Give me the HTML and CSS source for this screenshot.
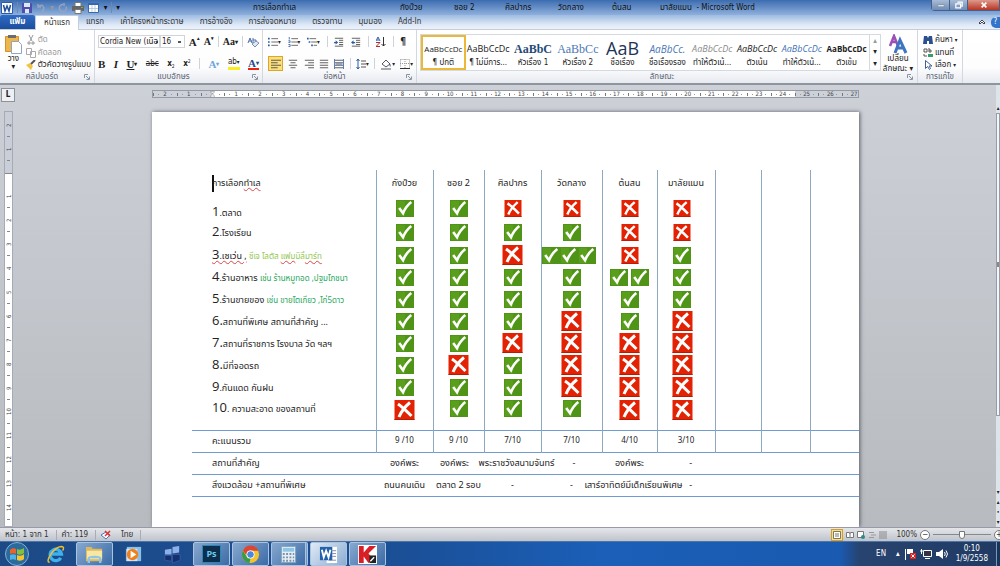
FILE: index.html
```html
<!DOCTYPE html>
<html lang="th">
<head>
<meta charset="utf-8">
<title>การเลือกทำเล - Microsoft Word</title>
<link rel="stylesheet" href="styles.css">
</head>
<body>
<svg class="defs" aria-hidden="true">
  <symbol id="ok" viewBox="0 0 18 17"><path fill="#4f9416" d="M0 0h18v17H0z"/><path fill="#66a91f" d="M1 1h8v15H1z" opacity=".5"/><path fill="none" stroke="#fff" stroke-width="2.600" d="M3.200 8 7 13.200C9 8.500 11.500 5 15.300 2"/></symbol>
  <symbol id="no" viewBox="0 0 20 20"><path fill="#e32204" d="M0 0h20v20H0z"/><path fill="#b51b05" d="M0 19h20v1H0z"/><path fill="none" stroke="#fff" stroke-width="3" d="M3.500 4C8 7 12 11 17 16M15.500 2.500C10 7 7 11 4.500 17"/></symbol>
  <symbol id="lines" viewBox="0 0 12 12"><path stroke="#444" d="M0 1.500h12M0 4.500h8M0 7.500h12M0 10.500h8"/></symbol>
  <symbol id="center" viewBox="0 0 12 12"><path stroke="#444" d="M1 1.500h10M3 4.500h6M1 7.500h10M3 10.500h6"/></symbol>
  <symbol id="right" viewBox="0 0 12 12"><path stroke="#444" d="M1 1.500h11M5 4.500h7M1 7.500h11M5 10.500h7"/></symbol>
  <symbol id="full" viewBox="0 0 12 12"><path stroke="#444" d="M1 1.500h10M1 4.500h10M1 7.500h10M1 10.500h10"/></symbol>
  <symbol id="bul" viewBox="0 0 12 12"><path stroke="#555" d="M4 2h8M4 6h8M4 10h8"/><path fill="#2b5ca8" d="M0 1h2v2H0zM0 5h2v2H0zM0 9h2v2H0z"/></symbol>
  <symbol id="num" viewBox="0 0 12 12"><path stroke="#555" d="M4 2h8M4 6h8M4 10h8"/><path fill="none" stroke="#2b5ca8" d="M1.500 0v3M.5 4.500h2v2h-2M.5 9h2v2.500h-2"/></symbol>
  <symbol id="multi" viewBox="0 0 12 12"><path stroke="#555" d="M3 2h8M5 6h7M8 10h4"/><path fill="#2b5ca8" d="M0 1h2v2H0zM2 5h2v2H2zM5 9h2v2H5z"/></symbol>
  <symbol id="indent" viewBox="0 0 12 12"><path stroke="#444" d="M1 1.500h10M6 4h5M6 6.500h5M6 9h5M1 11h10"/><path fill="#2b5ca8" d="M0 6.500 3 4v2h2v1.500H3V9z"/></symbol>
  <symbol id="outdent" viewBox="0 0 12 12"><path stroke="#444" d="M1 1.500h10M6 4h5M6 6.500h5M6 9h5M1 11h10"/><path fill="#2b5ca8" d="M5 6.500 2 4v2H0v1.500h2V9z"/></symbol>
  <symbol id="dialog" viewBox="0 0 6 6"><path fill="none" stroke="#8a93a0" d="M.5 4V.5H4M2 2l3 3M5.500 2.500v3h-3"/></symbol>
</svg>
<div class="app">
  <header class="titlebar">
    <div class="qat">
      <svg class="i12" viewBox="0 0 12 12"><path fill="#fff" stroke="#2a5da8" d="M.5.5h11v11H.5z"/><path fill="none" stroke="#1e4f9f" stroke-width="1.500" d="m2.500 3 1.500 6L6 4l2 5 1.500-6"/></svg>
      <i class="sep"></i>
      <svg class="i10" viewBox="0 0 10 10"><path fill="#4c4fae" d="M0 0h9l1 1v9H0z"/><path fill="#dfe6f6" d="M2 0h6v4H2zM3 6h4v4H3z"/></svg>
      <svg class="i10" viewBox="0 0 10 10"><path fill="none" stroke="#93a4c0" stroke-width="1.500" d="M2 1v3h3M2 4c4-4 8 0 4 5"/></svg><span class="dim">▾</span>
      <svg class="i10" viewBox="0 0 10 10"><path fill="none" stroke="#93a4c0" stroke-width="1.500" d="M5 1.500a3.500 3.500 0 1 0 3 2M6 0v3"/></svg>
      <svg class="i12" viewBox="0 0 12 12"><path fill="#fff" stroke="#777" d="M3 .5h6v4H3z"/><path fill="#666" d="M0 4h12v5H0z"/><path fill="#fff" stroke="#777" d="M3 7.500h6v4H3z"/><path fill="#6dbd45" d="M9 5h2v1H9z"/></svg>
      <svg class="i12" viewBox="0 0 12 12"><path fill="#fff" stroke="#3768af" d="M.5 1.500h10v9H.5z"/><path fill="#3768af" d="M0 1h11v2H0z"/><path stroke="#bcd" d="M4 3v7M7 3v7M1 6.500h9"/></svg><span>▾</span>
      <i class="sep"></i><span>▾</span>
    </div>
    <span>การเลือกทำเล</span><span>กังบ๊วย</span><span>ซอย 2</span><span>ศิลปากร</span><span>วัดกลาง</span><span>ต้นสน</span><span>มาลัยแมน&nbsp; - Microsoft Word</span>
    <div class="winbtns">
      <button type="button" aria-label="ย่อ"><svg class="i10" viewBox="0 0 10 10"><path fill="#fff" stroke="#567" stroke-width=".5" d="M1 5h8v2H1z"/></svg></button>
      <button type="button" aria-label="คืนค่า"><svg class="i10" viewBox="0 0 10 10"><path fill="none" stroke="#fff" stroke-width="1.500" d="M3 1.500h6v5H7M1 3.500h6v5H1z"/></svg></button>
      <button type="button" class="close" aria-label="ปิด"><svg class="i10" viewBox="0 0 10 10"><path stroke="#fff" stroke-width="2" d="m2 2 6 6M8 2 2 8"/></svg></button>
    </div>
  </header>
  <nav class="tabs">
    <button type="button" class="file">แฟ้ม</button>
    <button type="button" class="on">หน้าแรก</button>
    <button type="button">แทรก</button>
    <button type="button">เค้าโครงหน้ากระดาษ</button>
    <button type="button">การอ้างอิง</button>
    <button type="button">การส่งจดหมาย</button>
    <button type="button">ตรวจทาน</button>
    <button type="button">มุมมอง</button>
    <button type="button">Add-In</button>
    <span class="help"><svg class="i8" viewBox="0 0 8 8"><path fill="#fff" stroke="#445" d="m1 5 3-3 3 3-1 1-2-2-2 2z"/></svg><button type="button" class="q">?</button></span>
  </nav>
  <section class="ribbon">
    <div class="group clip">
      <div class="body">
        <button type="button" class="big"><svg class="i20" viewBox="0 0 20 20"><path fill="#edb64c" stroke="#d2922b" d="M2.500 2.500h13v15h-13z"/><path fill="#6c6c70" d="M5 1h8v3H5z"/><path fill="#fff" stroke="#8fa5c4" d="M8.500 7.500h7l3 3v9h-10z"/></svg><span>วาง</span><span class="car">▾</span></button>
        <div class="stack">
          <button type="button" class="dim"><svg class="i10" viewBox="0 0 10 10"><path fill="none" stroke="#999" d="m3 0 3 6M7 0 4 6M2 7h2v2H2zM6 7h2v2H6z"/></svg>ตัด</button>
          <button type="button" class="dim"><svg class="i10" viewBox="0 0 10 10"><path fill="#fff" stroke="#aaa" d="M.5.5h5v6h-5zM4.500 3.500h5v6h-5z"/></svg>คัดลอก</button>
          <button type="button"><svg class="i10" viewBox="0 0 10 10"><path fill="#f1c543" d="m0 5 4-2 3 3-2 4z"/><path stroke="#555" stroke-width="2" d="m5 4 4-4"/></svg>ตัวคัดวางรูปแบบ</button>
        </div>
      </div>
      <div class="cap"><span>คลิปบอร์ด</span><svg class="i6"><use href="#dialog"/></svg></div>
    </div>
    <div class="group font">
      <div class="body rows">
        <div class="line">
          <select class="face" aria-label="แบบอักษร"><option>Cordia New (เนื้อ</option></select><select class="size" aria-label="ขนาด"><option>16</option></select>
          <button type="button" class="serif">A<sup>▴</sup></button><button type="button" class="serif sm">A<sup>▾</sup></button><i class="sep"></i>
          <button type="button" class="serif sm">Aa<small>▾</small></button><i class="sep"></i>
          <button type="button" aria-label="ล้างการจัดรูปแบบ"><svg class="i12" viewBox="0 0 12 12"><path fill="none" stroke="#4b6ea8" d="m1 7 2-5 2 5M2 5h3M6 2v5h3V4H6"/><path fill="#dfe8f5" stroke="#7c8fb0" d="m5 8 4-3 3 2-4 4z"/></svg></button>
        </div>
        <div class="line spread">
          <button type="button" class="serif"><b>B</b></button><button type="button" class="serif"><i>I</i></button><button type="button" class="serif"><u>U</u><small>▾</small></button><button type="button"><s>abc</s></button><button type="button"><b>x</b><sub>2</sub></button><button type="button"><b>x</b><sup>2</sup></button><i class="sep"></i>
          <button type="button" class="serif glow">A<small>▾</small></button><button type="button" class="hl">ab<small>▾</small></button><button type="button" class="serif red"><b>A</b><small>▾</small></button>
        </div>
      </div>
      <div class="cap"><span>แบบอักษร</span><svg class="i6"><use href="#dialog"/></svg></div>
    </div>
    <div class="group para">
      <div class="body rows">
        <div class="line spread">
          <button type="button"><svg class="i10"><use href="#bul"/></svg><small>▾</small></button><button type="button"><svg class="i10"><use href="#num"/></svg><small>▾</small></button><button type="button"><svg class="i10"><use href="#multi"/></svg><small>▾</small></button><i class="sep"></i>
          <button type="button"><svg class="i10"><use href="#outdent"/></svg></button><button type="button"><svg class="i10"><use href="#indent"/></svg></button><i class="sep"></i>
          <button type="button"><svg class="i10" viewBox="0 0 10 10"><path fill="none" stroke="#2b5ca8" d="m0 4 2-4 2 4M1 3h2"/><path fill="none" stroke="#b03030" d="M0 5.500h4l-4 4h4"/><path stroke="#333" d="M7.500 0v9M5.500 7l2 2 2-2" fill="none"/></svg></button><i class="sep"></i>
          <button type="button" class="pil">¶</button><span></span>
        </div>
        <div class="line spread">
          <button type="button" class="sel"><svg class="i10"><use href="#lines"/></svg></button><button type="button"><svg class="i10"><use href="#center"/></svg></button><button type="button"><svg class="i10"><use href="#right"/></svg></button><button type="button"><svg class="i10"><use href="#full"/></svg></button><button type="button"><svg class="i10" viewBox="0 0 12 12"><use href="#full"/><path stroke="#2b5ca8" fill="none" d="M.5 0v12M11.500 0v12M2 6h8"/></svg></button><i class="sep"></i>
          <button type="button"><svg class="i10" viewBox="0 0 10 10"><path stroke="#2b5ca8" fill="none" d="M2 0v10M.5 2 2 0l1.500 2M.5 8 2 10l1.500-2"/><path stroke="#555" d="M5 2h5M5 5h5M5 8h5"/></svg><small>▾</small></button><i class="sep"></i>
          <button type="button"><svg class="i12" viewBox="0 0 12 12"><path fill="#fff" stroke="#556" d="m2 6 4-4 4 4-4 3z"/><path fill="#2b5ca8" d="M9 5c2 1 2 3 1 4z"/><path fill="#aaa" d="M1 10h10v2H1z"/></svg><small>▾</small></button><button type="button"><svg class="i10" viewBox="0 0 10 10"><path fill="none" stroke="#999" stroke-dasharray="1 1" d="M.5.5h9v8M.5.5v8M5 0v9M0 4.500h10"/><path stroke="#333" d="M0 9.500h10"/></svg><small>▾</small></button>
        </div>
      </div>
      <div class="cap"><span>ย่อหน้า</span><svg class="i6"><use href="#dialog"/></svg></div>
    </div>
    <div class="group styles">
      <div class="body">
        <div class="gallery">
          <button type="button" class="cur"><span class="s">AaBbCcDc</span><span>¶ ปกติ</span></button>
          <button type="button"><span class="s">AaBbCcDc</span><span>¶ ไม่มีการ...</span></button>
          <button type="button"><span class="s h1">AaBbC</span><span>หัวเรื่อง 1</span></button>
          <button type="button"><span class="s h2">AaBbCc</span><span>หัวเรื่อง 2</span></button>
          <button type="button"><span class="s ttl">AaB</span><span>ชื่อเรื่อง</span></button>
          <button type="button"><span class="s sub">AaBbCc.</span><span>ชื่อเรื่องรอง</span></button>
          <button type="button"><span class="s subtle">AaBbCcDc</span><span>ทำให้ตัวเน้...</span></button>
          <button type="button"><span class="s em">AaBbCcDc</span><span>ตัวเน้น</span></button>
          <button type="button"><span class="s int">AaBbCcDc</span><span>ทำให้ตัวเน้...</span></button>
          <button type="button"><span class="s strong">AaBbCcDc</span><span>ตัวเข้ม</span></button>
        </div>
        <div class="scroller"><button type="button" class="dim">▴</button><button type="button">▾</button><button type="button">▾</button></div>
        <button type="button" class="big change"><svg class="i20" viewBox="0 0 20 20"><path fill="none" stroke="#9c4fb4" stroke-width="2.500" d="m2 12 4-10 4 10M4 8h5"/><path fill="none" stroke="#3f74c0" stroke-width="3" d="m7 19 5-13 6 13M9 14h7"/></svg><span>เปลี่ยน</span><span>ลักษณะ ▾</span></button>
      </div>
      <div class="cap"><span>ลักษณะ</span><svg class="i6"><use href="#dialog"/></svg></div>
    </div>
    <div class="group edit">
      <div class="body"><div class="stack">
        <button type="button"><svg class="i10" viewBox="0 0 10 10"><path fill="#2c4f8f" d="M1 1h3l1 2 1-2h3l1 8H6V6H4v3H0z"/></svg>ค้นหา <small>▾</small></button>
        <button type="button"><svg class="i10" viewBox="0 0 10 10"><path fill="none" stroke="#555" d="M1 1h3v3H1zM6 0v4h2V2H6M1 6v2h3"/><path fill="#3a9b6b" d="M5 6h5v3H5z"/></svg>แทนที่</button>
        <button type="button"><svg class="i10" viewBox="0 0 10 10"><path fill="#fff" stroke="#3f5f95" d="M2.500.5v8l2-2 2 3 1-1-1.500-2.500H9z"/></svg>เลือก <small>▾</small></button>
      </div></div>
      <div class="cap"><span>การแก้ไข</span></div>
    </div>
  </section>
  <main class="work">
    <div class="left">
      <button type="button" class="tabsel">L</button>
      <div class="vruler"><div class="vin top"><span>2</span><span>1</span></div><div class="vin"><span>1</span><span>2</span><span>3</span><span>4</span><span>5</span><span>6</span><span>7</span><span>8</span><span>9</span><span>10</span><span>11</span><span>12</span><span>13</span><span>14</span></div></div>
    </div>
    <div class="canvas">
      <div class="hruler">
        <div class="hin"><span>2</span><span>1</span><span class="zero"><svg viewBox="0 0 8 14"><path fill="#eee" stroke="#777" d="M.5.500h7v2L4 6 .5 2.500zM4 6l3.500 3v4h-7V9z"/></svg></span><span>1</span><span>2</span><span>3</span><span>4</span><span>5</span><span>6</span><span>7</span><span>8</span><span>9</span><span>10</span><span>11</span><span>12</span><span>13</span><span>14</span><span>15</span><span>16</span><span>17</span><span>18</span><span>19</span><span>20</span><span>21</span><span>22</span><span>23</span><span>24</span><span>25</span><span>26</span><span>27</span></div>
      </div>
      <article class="page">
        <table>
          <colgroup><col class="c0"><col class="c1"><col class="c2"><col class="c3"><col class="c4"><col class="c5"><col class="c6"><col class="c7"><col class="c8"><col></colgroup>
          <thead><tr><th scope="col"><span class="caret"></span>การเลือก<span class="err">ทำเล</span></th><th scope="col">กังบ๊วย</th><th scope="col">ซอย 2</th><th scope="col">ศิลปากร</th><th scope="col">วัดกลาง</th><th scope="col">ต้นสน</th><th scope="col">มาลัยแมน</th><th></th><th></th><th></th></tr></thead>
          <tbody>
          <tr class="tall first"><th scope="row"><b>1</b>.ตลาด</th><td><svg class="ok"><use href="#ok"/></svg></td><td><svg class="ok"><use href="#ok"/></svg></td><td><svg class="no sm"><use href="#no"/></svg></td><td><svg class="no sm"><use href="#no"/></svg></td><td><svg class="no sm"><use href="#no"/></svg></td><td><svg class="no sm"><use href="#no"/></svg></td><td></td><td></td><td></td></tr>
          <tr class="tall"><th scope="row"><b>2</b>.โรงเรียน</th><td><svg class="ok"><use href="#ok"/></svg></td><td><svg class="ok"><use href="#ok"/></svg></td><td><svg class="ok"><use href="#ok"/></svg></td><td><svg class="ok"><use href="#ok"/></svg></td><td><svg class="no sm"><use href="#no"/></svg></td><td><svg class="no sm"><use href="#no"/></svg></td><td></td><td></td><td></td></tr>
          <tr><th scope="row"><span class="err"><b>3</b>.เซเว่น ,</span> <span class="lime">ซีเจ โลตัส <span class="err">แฟม</span>มิลี่<span class="err">มาร์ท</span></span></th><td><svg class="ok"><use href="#ok"/></svg></td><td><svg class="ok"><use href="#ok"/></svg></td><td><svg class="no"><use href="#no"/></svg></td><td><span class="run"><svg class="ok"><use href="#ok"/></svg><svg class="ok"><use href="#ok"/></svg><svg class="ok"><use href="#ok"/></svg></span></td><td><svg class="no sm"><use href="#no"/></svg></td><td><svg class="ok"><use href="#ok"/></svg></td><td></td><td></td><td></td></tr>
          <tr><th scope="row"><b>4</b>.ร้านอาหาร <span class="green">เช่น ร้านหมูทอด ,ปฐมโภชนา</span></th><td><svg class="ok"><use href="#ok"/></svg></td><td><svg class="ok"><use href="#ok"/></svg></td><td><svg class="ok"><use href="#ok"/></svg></td><td><svg class="ok"><use href="#ok"/></svg></td><td><span class="run two"><svg class="ok"><use href="#ok"/></svg><svg class="ok"><use href="#ok"/></svg></span></td><td><svg class="ok"><use href="#ok"/></svg></td><td></td><td></td><td></td></tr>
          <tr><th scope="row"><b>5</b>.ร้านขายของ <span class="green">เช่น ขายโตเกียว ,ไก่5ดาว</span></th><td><svg class="ok"><use href="#ok"/></svg></td><td><svg class="ok"><use href="#ok"/></svg></td><td><svg class="ok"><use href="#ok"/></svg></td><td><svg class="ok"><use href="#ok"/></svg></td><td><svg class="ok"><use href="#ok"/></svg></td><td><svg class="ok"><use href="#ok"/></svg></td><td></td><td></td><td></td></tr>
          <tr><th scope="row"><b>6.</b>สถานที่พิเศษ สถานที่สำคัญ ...</th><td><svg class="ok"><use href="#ok"/></svg></td><td><svg class="ok"><use href="#ok"/></svg></td><td><svg class="ok"><use href="#ok"/></svg></td><td><svg class="no"><use href="#no"/></svg></td><td><svg class="ok"><use href="#ok"/></svg></td><td><svg class="no"><use href="#no"/></svg></td><td></td><td></td><td></td></tr>
          <tr><th scope="row"><b>7.</b>สถานที่ราชการ โรงบาล วัด ฯลฯ</th><td><svg class="ok"><use href="#ok"/></svg></td><td><svg class="ok"><use href="#ok"/></svg></td><td><svg class="no"><use href="#no"/></svg></td><td><svg class="no"><use href="#no"/></svg></td><td><svg class="no"><use href="#no"/></svg></td><td><svg class="no"><use href="#no"/></svg></td><td></td><td></td><td></td></tr>
          <tr><th scope="row"><b>8.</b>มีที่จอดรถ</th><td><svg class="ok"><use href="#ok"/></svg></td><td><svg class="no"><use href="#no"/></svg></td><td><svg class="ok"><use href="#ok"/></svg></td><td><svg class="no"><use href="#no"/></svg></td><td><svg class="no"><use href="#no"/></svg></td><td><svg class="no"><use href="#no"/></svg></td><td></td><td></td><td></td></tr>
          <tr><th scope="row"><b>9</b>.กันแดด กันฝน</th><td><svg class="ok"><use href="#ok"/></svg></td><td><svg class="ok"><use href="#ok"/></svg></td><td><svg class="ok"><use href="#ok"/></svg></td><td><svg class="no"><use href="#no"/></svg></td><td><svg class="no"><use href="#no"/></svg></td><td><svg class="no"><use href="#no"/></svg></td><td></td><td></td><td></td></tr>
          <tr class="last"><th scope="row"><b>10</b>. ความสะอาด ของสถานที่</th><td><svg class="no"><use href="#no"/></svg></td><td><svg class="ok"><use href="#ok"/></svg></td><td><svg class="ok"><use href="#ok"/></svg></td><td><svg class="ok"><use href="#ok"/></svg></td><td><svg class="no"><use href="#no"/></svg></td><td><svg class="no"><use href="#no"/></svg></td><td></td><td></td><td></td></tr>
          </tbody>
          <tfoot>
          <tr class="score"><th scope="row">คะแนนรวม</th><td>9 /10</td><td>9 /10</td><td>7/10</td><td>7/10</td><td>4/10</td><td>3/10</td><td></td><td></td><td></td></tr>
          <tr class="note"><th scope="row">สถานที่สำคัญ</th><td>องค์พระ</td><td>องค์พระ</td><td><span class="over">พระราชวังสนามจันทร์</span></td><td>&nbsp; -</td><td>องค์พระ</td><td>&nbsp; &nbsp; -</td><td></td><td></td><td></td></tr>
          <tr class="note"><th scope="row">สิ่งแวดล้อม +สถานที่พิเศษ</th><td>ถนนคนเดิน</td><td>ตลาด 2 รอบ</td><td>-</td><td>-</td><td><span class="over">เสาร์อาทิตย์มีเด็กเรียนพิเศษ</span></td><td>&nbsp; &nbsp; -</td><td></td><td></td><td></td></tr>
          </tfoot>
        </table>
      </article>
    </div>
    <div class="vscroll"><button type="button">▴</button><div class="thumb"></div><button type="button">▾</button><button type="button">▴</button><button type="button">•</button><button type="button">▾</button></div>
  </main>
  <footer class="status">
    <span>หน้า: 1 จาก 1</span><span>คำ: 119</span><span class="plain"><svg class="i10" viewBox="0 0 10 10"><path fill="#fff" stroke="#4a78bd" d="m0 5 5-3 4 3-4 4z"/><path stroke="#d33" stroke-width="1.500" d="m4 1 5 5M9 1 4 6"/></svg></span><span>ไทย</span>
    <div class="views">
      <button type="button" class="sel"><svg class="i8" viewBox="0 0 8 8"><path fill="#fff" stroke="#777" d="M.5.5h7v7h-7zM2 3h4M2 5h4"/></svg></button><button type="button"><svg class="i8" viewBox="0 0 8 8"><path fill="#fff" stroke="#777" d="M.5 1.500h3l.5 1 .5-1h3v5h-3L4 7l-.5-.5h-3zM4 2v5"/></svg></button><button type="button"><svg class="i8" viewBox="0 0 8 8"><path fill="#fff" stroke="#777" d="M.5.5h6v6h-6z"/><circle cx="6" cy="6" r="2" fill="#2c8a8a"/></svg></button><button type="button"><svg class="i8" viewBox="0 0 8 8"><path stroke="#999" d="M1 1.500h5M3 4h5M1 6.500h5"/></svg></button><button type="button"><svg class="i8" viewBox="0 0 8 8"><path stroke="#888" d="M0 1h8M0 3h8M0 5h8M0 7h8"/></svg></button>
      <span class="pct">100%</span><button type="button" class="round">−</button><input type="range" aria-label="ย่อ/ขยาย" value="50"><button type="button" class="round">+</button>
    </div>
  </footer>
  <div class="taskbar">
    <button type="button" class="start" aria-label="เริ่ม"><svg viewBox="0 0 24 24"><circle cx="12" cy="12" r="11.500" fill="#2b6a9d" stroke="#7fb1d4"/><path fill="#e9632a" d="M5 8c2-2 4-2 6-1v5c-2-1-4-1-6 0z"/><path fill="#86bf3d" d="M12 7c2 1 4 1 7-1v5c-2 2-5 2-7 1z"/><path fill="#4fb2e6" d="M5 13c2-1 4-1 6 0v5c-2-1-4-1-6 0z"/><path fill="#f6c52e" d="M12 13c2 1 5 1 7-1v5c-2 2-5 2-7 1z"/></svg></button>
    <button type="button" aria-label="Internet Explorer"><svg viewBox="0 0 20 20"><path fill="none" stroke="#3cb1ee" stroke-width="3.500" d="M15.500 13.500a6 6 0 1 1 .7-4H6"/><path fill="none" stroke="#f5bf2c" stroke-width="1.500" d="M4 18C-2 19 8 2 16 1.500c3 0 3 2 1.500 4.500"/></svg></button>
    <button type="button" class="open" aria-label="Explorer"><svg viewBox="0 0 20 20"><path fill="#dcb860" d="M1 2h6l1 2h10v13H1z"/><path fill="#f8e7a2" d="M2 6h16v9H2z"/><path fill="none" stroke="#8cc5e8" stroke-width="2.500" d="M4 19v-5c0-2 12-2 12 0v5"/></svg></button>
    <button type="button" aria-label="Media Player"><svg viewBox="0 0 20 20"><path fill="#8abfe6" d="M3 2h15v15H3z"/><path fill="#fff" d="M2 4h12v13H2z" opacity=".6"/><circle cx="9" cy="10" r="6" fill="#f08019"/><path fill="#fff" d="m7 6 6 4-6 4z"/></svg></button>
    <button type="button" aria-label="หน้าต่าง"><svg viewBox="0 0 20 20"><path fill="#8eb0ea" d="m10 2 7-1v7l-7 1zM2 5l7-1v6H2z"/><path fill="#15306e" stroke="#4d70b8" stroke-width=".5" d="M2 11h7v6l-7-1zM10 10h8v6l-8 3z"/></svg></button>
    <button type="button" class="open"><span class="ps">Ps</span></button>
    <button type="button" class="open" aria-label="Chrome"><svg viewBox="0 0 20 20"><circle cx="10" cy="10" r="9" fill="#f4c430"/><path fill="#dd4535" d="M2 6a9 9 0 0 1 16.500 0H10l-4 5z"/><path fill="#389b47" d="M2 6l5 8 3 0-1 5A9 9 0 0 1 2 6z"/><circle cx="10" cy="10" r="4" fill="#4689df" stroke="#fff"/></svg></button>
    <button type="button" class="open stackd" aria-label="เครื่องคิดเลข"><svg viewBox="0 0 20 20"><path fill="#e8eef4" stroke="#7da3bf" d="M2.500 1.500h15v17h-15z"/><path fill="#8cc6e9" d="M4 3h12v4H4z"/><path stroke="#7893a8" stroke-width="2" stroke-dasharray="2 1.500" d="M4 9.500h12M4 13h12M4 16.500h12"/></svg></button>
    <button type="button" class="open active" aria-label="Word"><svg viewBox="0 0 20 20"><path fill="#fff" d="M8 2h11v17H8z"/><path stroke="#88a" d="M14 6h4M14 9h4M14 12h4M10 16h8"/><path fill="#2360ad" d="M1 2h13v14H1z"/><path fill="none" stroke="#fff" stroke-width="2" d="m3 5 2 8 2.500-7L10 13l2-8"/></svg></button>
    <button type="button" class="open" aria-label="Kaspersky"><svg viewBox="0 0 20 20"><path fill="#fff" d="M0 0h20v20H0z"/><path fill="#d81f26" d="M1 1h5v7l6-7h7l-8 8 5 6-5 4-5-7v7H1z"/><path fill="#222" d="M12 11h7v8h-7z"/><path stroke="#fff" stroke-width="1.500" d="m13 17 4-4"/></svg></button>
    <div class="tray"><span class="en">EN</span><span>▴</span>
      <svg class="i12" viewBox="0 0 12 12"><path fill="#fff" d="M1 1h1v11H1zM3 1h6v5H3z"/><path fill="#d22" d="M6 5h6v6H6z"/><path stroke="#fff" d="m7.500 6.500 3 3M10.500 6.500l-3 3"/></svg>
      <svg class="i12" viewBox="0 0 12 12"><path fill="#334" stroke="#fff" d="M3.500 2.500h8v6h-8zM5 10.500h5M1.500 1v5M0 3h3"/></svg>
      <svg class="i12" viewBox="0 0 12 12"><path fill="#fff" d="M0 4h3l4-3v10L3 8H0z"/><path fill="none" stroke="#fff" d="M8.500 4q1.500 2 0 4M10 2.500q3 3.500 0 7"/></svg>
      <time class="clock"><span>0:10</span><span>1/9/2558</span></time><i class="show"></i></div>
  </div>
</div>
</body>
</html>
```
FILE: styles.css
```css
* { box-sizing: border-box; }
body { margin: 0; font: 8px/10px "DejaVu Sans Condensed", "DejaVu Sans", "Noto Sans Thai", sans-serif; color: #222; }
button, select, input { font: inherit; color: inherit; margin: 0; padding: 0; border: 0; background: none; }
button { display: flex; align-items: center; justify-content: center; white-space: nowrap; }
svg { display: block; flex: none; }
small { font-size: 6px; }
.defs { position: absolute; width: 0; height: 0; }
.app { height: 100vh; display: flex; flex-direction: column; overflow: hidden; }
.i6 { width: 6px; height: 6px; }
.i8 { width: 8px; height: 8px; }
.i10 { width: 10px; height: 10px; }
.i12 { width: 12px; height: 12px; }
.i20 { width: 20px; height: 20px; }
.sep { width: 1px; height: 11px; background: #ccd3dc; }
.dim { color: #999; }

.titlebar { flex: none; height: 15px; display: grid; grid-template-columns: 253px 147px 54px 51px 53px 54px 48px 1fr auto; align-items: center; white-space: nowrap; color: #111; background: linear-gradient(#3c6cb0, #8fb0dc); }
.qat { display: flex; align-items: center; gap: 4px; padding-left: 1px; }
.qat .sep { background: #6b89b5; }
.winbtns { display: flex; height: 11px; align-self: start; border: 1px solid #44618c; border-top: 0; border-radius: 0 0 0 4px; }
.winbtns button { width: 18px; background: linear-gradient(#a9bcd6, #6f8cb5); border-right: 1px solid #44618c; }
.winbtns .i10 { width: 8px; height: 8px; }
.winbtns .close { width: 31px; background: linear-gradient(#dd9a8c, #b93422); border: 0; }

.tabs { flex: none; height: 15px; display: flex; background: linear-gradient(#9dbbe2, #dfe9f6 70%, #edf2f9); border-bottom: 1px solid #c3cedd; color: #333; }
.tabs > button { padding: 0 8px; }
.tabs .file { width: 35px; background: linear-gradient(#2f6cc4, #1c4d9e); color: #fff; font-weight: bold; border-radius: 2px 2px 0 0; }
.tabs .on { width: 44px; margin-right: -1px; margin-bottom: -1px; background: #fff; border: 1px solid #c3cedd; border-bottom: 0; border-radius: 2px 2px 0 0; }
.help { margin-left: auto; display: flex; align-items: center; gap: 5px; }
.help .q { width: 9px; height: 11px; background: #3475cc; color: #fff; border-radius: 5px 0 0 5px; }

.ribbon { flex: none; height: 55px; display: flex; background: linear-gradient(#fff, #fdfdfe 70%, #e7eaf0); border-bottom: 2px solid #8e959f; }
.group { display: flex; flex-direction: column; border-right: 1px solid #d3d8df; }
.body { flex: 1; display: flex; padding: 4px 3px 0; min-height: 0; }
.cap { height: 12px; display: flex; align-items: center; justify-content: center; color: #5a6472; }
.cap span { flex: 1; text-align: center; }
.cap svg { margin-right: 4px; }
.clip { width: 95px; }
.font { width: 168px; }
.para { width: 154px; }
.styles { width: 501px; }
.edit { width: 45px; }
.big { flex-direction: column; justify-content: flex-start; width: 25px; }
.car { line-height: 6px; }
.stack { display: flex; flex-direction: column; justify-content: space-between; align-items: flex-start; padding-left: 2px; }
.stack button { gap: 2px; height: 12px; }
.rows { flex-direction: column; justify-content: space-between; }
.line { height: 15px; display: flex; align-items: center; gap: 4px; }
.para .line { padding-left: 2px; }
.spread { justify-content: space-between; }
.line sup, .line sub { font-size: 5px; line-height: 5px; }
.line sup { align-self: flex-start; }
.line sub { align-self: flex-end; }
.serif { font: bold 11px/12px "Liberation Serif", serif; }
.serif.sm { font-size: 10px; }
.pil { font-size: 10px; font-weight: bold; }
.face, .size { height: 13px; border: 1px solid #d0d5dc; background: #fff; appearance: none; padding-left: 1px; }
.face { width: 62px; background: linear-gradient(#555, #555) right 1px center / 2px 2px no-repeat; }
.size { width: 26px; margin-left: -4px; background: linear-gradient(#555, #555) right 3px center / 3px 2px no-repeat; }
.glow { color: #6ea7df; }
.hl { border-bottom: 3px solid #fbee1f; }
.red { border-bottom: 2px solid #e21; line-height: 10px; color: #234a8c; }
.line .sel { width: 15px; height: 15px; background: #fbdf7b; border: 1px solid #dca52b; }
.styles .body { padding: 4px 2px 0 3px; }
.gallery { flex: 1; display: grid; grid-template-columns: repeat(10, 1fr); border: 1px solid #d5dae1; background: #fff; min-width: 0; height: 37px; }
.gallery button { flex-direction: column; min-width: 0; }
.gallery .cur { border: 2px solid #ecb838; }
.s { height: 20px; font: 9px/22px "Open Sans", sans-serif; color: #222; }
.cur .s, .strong { font-size: 8px; }
.h1 { font: bold 11px/22px "Liberation Serif", serif; color: #244a78; }
.h1, .h2 { font-size: 12px; }
.h2 { font-family: "Liberation Serif", serif; color: #4a78b8; }
.ttl { font-size: 18px; line-height: 20px; color: #1d3557; }
.sub { font-style: italic; color: #4a78b8; font-size: 10px; }
.subtle { font-style: italic; color: #8a8a8a; }
.em { font-style: italic; }
.int { font-style: italic; color: #3f73b5; }
.strong { font-weight: bold; }
.scroller { width: 11px; height: 37px; display: grid; border: 1px solid #d5dae1; border-left: 0; }
.change { width: 34px; }

.work { flex: 1; min-height: 0; display: flex; background: linear-gradient(#cdd0d7, #b7bbbf); }
.left { width: 16px; display: flex; flex-direction: column; align-items: center; gap: 9px; }
.tabsel { width: 14px; height: 14px; margin-top: 3px; flex: none; border: 1px solid #8c929b; background: #eef0f3; font-weight: bold; }
.vruler { flex: 1; min-height: 0; overflow: hidden; width: 9px; border: 1px solid #a4abb6; background: #fff; }
.vin { display: flex; flex-direction: column; padding-top: 10px; }
.vin.top { background: #c9ced8; height: 62px; border-bottom: 1px solid #888; padding-top: 1px; }
.vin span { height: 24px; flex: none; writing-mode: vertical-rl; transform: rotate(180deg); text-align: center; font-size: 6px; line-height: 7px; color: #444; background: linear-gradient(#888, #888) center top / 3px 1px no-repeat; }
.canvas { flex: 1; min-width: 0; display: flex; flex-direction: column; padding: 5px 137px 0 136px; }
.hruler { flex: none; height: 8px; overflow: hidden; background: linear-gradient(90deg, #ccd1da 60px, #fff 60px, #fff 91%, #ccd1da 91%); border: 1px solid #959ba5; }
.hin { display: grid; grid-template-columns: repeat(30, 1fr); margin-right: -8px; }
.hin span { text-align: center; font-size: 6px; line-height: 6px; color: #444; background: linear-gradient(#777, #777) left center / 1px 3px no-repeat, linear-gradient(#999, #999) 5px center / 1px 1px no-repeat, linear-gradient(#999, #999) 18px center / 1px 1px no-repeat; }
.zero svg { width: 5px; height: 7px; margin: 0 auto; }
.page { flex: 1; margin-top: 14px; padding: 58px 0 0 40px; background: #fff; box-shadow: 1px 0 4px #5a5e64; }
.vscroll { width: 4px; display: flex; flex-direction: column; align-items: center; padding-top: 18px; background: #dde5ea; font-size: 6px; }
.thumb { flex: 1; width: 4px; border: 1px solid #969da6; background: linear-gradient(#888, #888) center / 2px 5px no-repeat #f3f6f9; margin-bottom: 71px; }

table { width: 100%; table-layout: fixed; border-collapse: collapse; font: 9px/14px "Noto Sans Thai", "DejaVu Sans", sans-serif; }
th, td { padding: 0; font-weight: normal; text-align: center; white-space: nowrap; border-left: 1px solid #8ea9bf; }
tr > :first-child { border-left: 0; text-align: left; padding-left: 20px; }
tbody th { vertical-align: middle; }
th b { font: 13px/14px "Open Sans", sans-serif; }
.c0 { width: 184px; }
.c1 { width: 57px; }
.c2 { width: 51px; }
.c3 { width: 57px; }
.c4 { width: 61px; }
.c5 { width: 55px; }
.c6 { width: 58px; }
.c7 { width: 46px; }
.c8 { width: 49px; }
thead tr { height: 26px; }
tbody tr { height: 22px; }
tbody .tall { height: 24px; }
.first th { vertical-align: bottom; }
tbody .last { height: 32px; }
.last > * { vertical-align: top; padding-top: 2px; }
td svg { margin: 0 auto; }
tbody td:nth-child(7) { padding-right: 8px; }
.ok { width: 18px; height: 17px; }
.no { width: 21px; height: 20px; }
.no.sm { width: 18px; height: 17px; }
.run { display: flex; }
.run svg { margin: 0; }
.two { justify-content: center; gap: 3px; }
tfoot tr { height: 22px; border-top: 1px solid #6f9bd0; }
tfoot tr:last-child { border-bottom: 1px solid #6f9bd0; }
.score td { font-size: 8px; }
.note td { border-left: 0; }
.note td:nth-child(3) { padding-right: 8px; }
.over { display: flex; justify-content: center; padding-left: 8px; }
tfoot tr:last-child td:nth-child(3) { padding-right: 0; }
.caret { display: inline-block; width: 2px; height: 17px; margin-right: -2px; vertical-align: middle; background: #111; }
.err { text-decoration: underline wavy #d44 1px; }
.lime, .green { font-size: 8px; }
.lime { color: #92c74f; }
.green { color: #1fa85a; }

.status { flex: none; height: 14px; display: flex; align-items: center; padding-left: 5px; background: linear-gradient(#e4e6ea, #bfc4cb); border-top: 1px solid #99a; color: #333; }
.status > span { padding-right: 7px; margin-right: 5px; border-right: 1px solid #aab; }
.status .plain { border: 0; margin: 0; padding-right: 10px; }
.views { margin-left: auto; display: flex; align-items: center; gap: 3px; }
.views .sel { width: 12px; height: 12px; background: #fbdf7b; border: 1px solid #d99e20; }
.pct { margin-left: 6px; }
.round { width: 10px; height: 10px; border: 1px solid #777; border-radius: 5px; background: #fff; }
.round:last-child { margin-right: -4px; }
.views input { width: 58px; height: 10px; appearance: none; background: linear-gradient(#888, #888) center / 100% 1px no-repeat; }
.views input::-webkit-slider-thumb { appearance: none; width: 6px; height: 8px; border: 1px solid #777; border-radius: 0 0 3px 3px; background: #fff; }

.taskbar { flex: none; height: 25px; display: flex; align-items: center; gap: 2px; padding-left: 4px; background: linear-gradient(90deg, #1d4a86, #1b4f96 40%, #1b5fb8 60%, #1a5ab0 84%, #27436f 86%, #203a63); border-top: 1px solid #4c76ab; }
.taskbar button { width: 37px; height: 24px; }
.taskbar svg { width: 19px; height: 19px; }
.taskbar .start { width: 25px; margin-right: 6px; }
.taskbar .start svg { width: 24px; height: 24px; }
.taskbar .open { background: linear-gradient(135deg, #86a8cf, #3c6ba6); border: 1px solid #a9c3e0; border-radius: 2px; }
.taskbar .active { background: linear-gradient(135deg, #dfeaf6, #8cacd2); }
.taskbar .stackd { border-right: 3px double #a9c3e0; }
.ps { width: 19px; height: 18px; background: #0b2f4c; border: 1px solid #2f86b5; color: #6cc9f2; font: bold 9px/15px "Open Sans", sans-serif; }
.tray { margin-left: auto; display: flex; align-items: center; gap: 4px; color: #fff; }
.taskbar .tray svg { width: 12px; height: 12px; }
.en { margin-right: 6px; }
.clock { display: flex; flex-direction: column; align-items: center; margin: 0 4px; }
.show { width: 4px; height: 24px; background: #173459; border-left: 1px solid #7d95b8; }
```
